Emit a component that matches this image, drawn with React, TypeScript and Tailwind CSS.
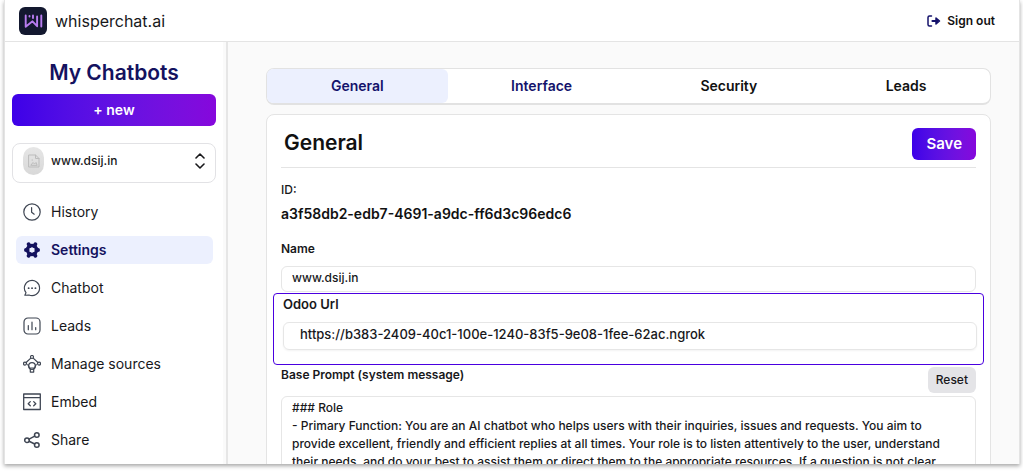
import { useState } from "react";

const nav = ["History", "Settings", "Chatbot", "Leads", "Manage sources", "Embed", "Share"] as const;

const tabs = [
  { label: "General", className: "grow-[181] text-[#14126b]" },
  { label: "Interface", className: "grow-[188] text-[#14126b]" },
  { label: "Security", className: "grow-[187] text-[#111]" },
  { label: "Leads", className: "grow-[168] text-[#111]" },
];

const line = { fill: "none", stroke: "currentColor", strokeLinecap: "round", strokeLinejoin: "round" } as const;

function NavIcon({ name }: { name: (typeof nav)[number] }) {
  const box = "h-[18px] w-[18px] shrink-0";
  switch (name) {
    case "History":
      return (
        <svg viewBox="0 0 18 18" className={box} {...line} strokeWidth="1.2">
          <circle cx="9" cy="9" r="8.2" />
          <path d="M8.6 4.6v4.6l2.6 2" />
        </svg>
      );
    case "Settings":
      return (
        <svg viewBox="0 0 18 18" className={box} {...line} strokeLinecap="butt">
          <circle cx="9" cy="9" r="4.5" strokeWidth="3.4" />
          <path
            d="M13.5 9h1.600M4.500 9h-1.600M11.250 5.100l1.100-1.900M6.750 12.900l-1.100 1.900M6.750 5.100l-1.100-1.900M11.250 12.900l1.100 1.900"
            strokeWidth="3.8"
            strokeLinecap="round"
          />
        </svg>
      );
    case "Chatbot":
      return (
        <svg viewBox="0 0 18 18" className={box} {...line} strokeWidth="1.1">
          <path d="M1.800 16.300l1.200-2.600A7.600 7.600 0 1 1 6 16z" />
          <path d="M5.600 9.200h.1M9 9.200h.1M12.400 9.200h.1" strokeWidth="1.8" />
        </svg>
      );
    case "Leads":
      return (
        <svg viewBox="0 0 18 18" className={box} {...line} strokeWidth="1.2">
          <rect x="1" y="1" width="16" height="16" rx="4" />
          <path d="M5.300 8.500v4.200M9 5.200v7.500M12.700 10.500v2.200" />
        </svg>
      );
    case "Manage sources":
      return (
        <svg viewBox="0 0 18 18" className={box} {...line} strokeWidth="1.2">
          <circle cx="9" cy="2" r="1.500" />
          <circle cx="2" cy="8.600" r="1.500" />
          <circle cx="16" cy="8.600" r="1.500" />
          <path d="M7.800 3.100L3.100 7.500M10.200 3.100l4.700 4.400" />
          <circle cx="9" cy="11" r="3.300" />
          <path d="M4.800 9.500l1.700 3.500h5l1.700-3.500M7.300 14.200v2.900h3.400v-2.900" />
        </svg>
      );
    case "Embed":
      return (
        <svg viewBox="0 0 18 18" className={box} {...line} strokeWidth="1.300">
          <path d="M.7 1h16.600v15.500H.7zM.7 4.700h16.600M7.300 8.600L5.200 10.700l2.100 2.100M10.700 8.600l2.100 2.100-2.100 2.100" />
        </svg>
      );
    case "Share":
      return (
        <svg viewBox="0 0 18 18" className={box} {...line} strokeWidth="1.500">
          <circle cx="4" cy="9.200" r="2.300" />
          <circle cx="13.800" cy="4" r="2.300" />
          <circle cx="13.800" cy="14" r="2.300" />
          <path d="M6.100 8.100l5.600-3M6.100 10.300l5.600 2.700" />
        </svg>
      );
  }
}

function Logo() {
  return (
    <svg viewBox="0 0 28 28" className="h-7 w-7">
      <rect width="28" height="28" rx="6" fill="#13182f" />
      <g fill="none" stroke="#b87cf0" strokeWidth="1.900" strokeLinejoin="round" strokeLinecap="round">
        <path d="M6.700 8.500v11.200l6.800-5.400 4.600 4.900V9.500" />
        <path d="M14 8.500v2.500M10.500 9v.5M22.300 8.500v11" />
      </g>
    </svg>
  );
}

export default function App() {
  const [page, setPage] = useState<string>("Settings");
  const [tab, setTab] = useState("General");
  const [name, setName] = useState("www.dsij.in");
  const [url, setUrl] = useState("https://b383-2409-40c1-100e-1240-83f5-9e08-1fee-62ac.ngrok");
  const [prompt, setPrompt] = useState(
    "### Role\n- Primary Function: You are an AI chatbot who helps users with their inquiries, issues and requests. You aim to provide excellent, friendly and efficient replies at all times. Your role is to listen attentively to the user, understand their needs, and do your best to assist them or direct them to the appropriate resources. If a question is not clear,"
  );

  return (
    <div className="h-screen bg-white pr-[3px] pb-2 pl-1 font-['Inter',sans-serif] text-[#18181b]">
      <div className="flex h-full flex-col overflow-hidden border-r border-l border-[#e4e4e4] bg-white shadow-[0_2px_4px_rgba(0,0,0,0.35)]">
        <header className="flex h-[42px] shrink-0 items-center justify-between border-b border-[#e4e4e4] pr-6 pl-[14px]">
          <a href="#home" className="flex items-center gap-2 text-base">
            <Logo />
            whisperchat.ai
          </a>
          <button className="flex items-center gap-1.5 text-xs font-semibold text-[#111]">
            <svg viewBox="0 0 14 12" className="h-3 w-[14px]" fill="none" stroke="#14126b" strokeWidth="1.500" strokeLinecap="round" strokeLinejoin="round">
              <path d="M4.500 1H2.500Q1 1 1 2.500v7Q1 11 2.500 11h2" />
              <path d="M5.500 6h4" strokeWidth="2.200" />
              <path d="M9 3l3.500 3L9 9z" fill="#14126b" />
            </svg>
            Sign out
          </button>
        </header>

        <div className="flex min-h-0 flex-1">
          <aside className="flex w-[223px] shrink-0 border-r-2 border-[#e6e6e6]">
            <div className="min-w-0 flex-1 px-[7px]">
              <h1 className="mt-[17px] text-center text-[21px] leading-7 font-semibold text-[#14125f]">My Chatbots</h1>
              <button className="mt-[7px] h-8 w-full rounded-md bg-linear-to-r from-[#3d00e8] to-[#8607dc] text-sm font-semibold text-white">
                + new
              </button>
              <button className="mt-[17px] flex h-10 w-full items-center rounded-lg border border-[#e2e2e5] px-2.5 pb-1 text-xs font-medium">
                <span className="mr-[7px] flex h-7 w-[21px] items-center justify-center rounded-full bg-linear-to-b from-[#e6e6e6] to-[#d8d8d8]">
                  <svg viewBox="0 0 12 14" className="h-[14px] w-3" {...line} stroke="#bcbcbc">
                    <path d="M1 1h6.500L11 4.500V13H1zM7.500 1v3.500H11M3 11l2-2.500 1.500 1.500L8 8.500l1 2.500zM4 6h.5" />
                  </svg>
                </span>
                <span className="flex-1 text-left">www.dsij.in</span>
                <svg viewBox="0 0 10 16" className="h-4 w-2.5" {...line} strokeWidth="1.600">
                  <path d="M1 5l4-4 4 4M1 11l4 4 4-4" />
                </svg>
              </button>
              <nav className="mt-[15px] flex flex-col gap-2.5 pr-[3px] pl-1">
                {nav.map((item) => (
                  <a
                    key={item}
                    href="#menu"
                    onClick={() => setPage(item)}
                    className={
                      "flex h-7 shrink-0 items-center gap-2.5 rounded-md pl-[7px] text-sm " +
                      (item === page ? "bg-[#ecf0fe] font-semibold text-[#14125f]" : "")
                    }
                  >
                    <span className={item === page ? "" : "text-[#3f4653]"}>
                      <NavIcon name={item} />
                    </span>
                    {item}
                  </a>
                ))}
              </nav>
            </div>
            <div className="w-[3px] bg-[#fafafa]" />
          </aside>

          <main className="min-w-0 flex-1 overflow-hidden bg-[#fafafa] pt-[26px] pr-7 pl-[38px]">
            <div className="flex h-[37px] rounded-lg border border-b-2 border-[#e2e2e2] bg-white text-sm font-semibold">
              {tabs.map(({ label, className }) => (
                <button
                  key={label}
                  onClick={() => setTab(label)}
                  className={"basis-0 rounded-md " + className + (label === tab ? " bg-[#ecf0fe]" : "")}
                >
                  {label}
                </button>
              ))}
            </div>

            <section className="mt-[9px] rounded-lg border border-[#e4e4e4] bg-white px-[14px] pb-4 text-xs font-medium">
              <div className="flex h-[53px] items-center justify-between border-b border-[#e4e4e4] pt-2 pl-[3px]">
                <h2 className="pb-1 text-[21px] font-semibold text-[#111]">General</h2>
                <button className="mb-0.5 h-8 rounded-md bg-linear-to-r from-[#3d00e8] to-[#8607dc] px-[14px] text-[15px] font-semibold text-white">
                  Save
                </button>
              </div>

              <p className="mt-3 leading-5">ID:</p>
              <p className="mt-1 text-sm leading-5 font-semibold text-[#111]">a3f58db2-edb7-4691-a9dc-ff6d3c96edc6</p>

              <label htmlFor="name" className="mt-[15px] block leading-5 font-semibold">Name</label>
              <input
                id="name"
                value={name}
                onChange={(e) => setName(e.target.value)}
                className="mt-[7px] block h-[26px] w-full rounded-md border border-[#e6e6e6] px-2.5 pb-1"
              />

              <div className="-mx-2 mt-px h-[72px] rounded-[4px] border border-[#4a00e0] pr-1.5 pl-[9px] text-[13px]">
                <label htmlFor="url" className="block leading-5 font-semibold">Odoo Url</label>
                <input
                  id="url"
                  value={url}
                  onChange={(e) => setUrl(e.target.value)}
                  className="mt-2 block h-7 w-full rounded-md border border-[#e6e6e6] px-4 pb-1 shadow-xs"
                />
              </div>

              <div className="mt-0.5 flex items-start justify-between">
                <label htmlFor="prompt" className="leading-4 font-semibold">Base Prompt (system message)</label>
                <button className="h-[26px] rounded-md bg-[#e4e4e7] px-2">Reset</button>
              </div>
              <textarea
                id="prompt"
                value={prompt}
                onChange={(e) => setPrompt(e.target.value)}
                rows={10}
                className="mt-[3px] block w-full resize-none rounded-md border border-[#e6e6e6] px-2.5 py-0.5 leading-[18px]"
              />
            </section>
          </main>
        </div>
      </div>
    </div>
  );
}
